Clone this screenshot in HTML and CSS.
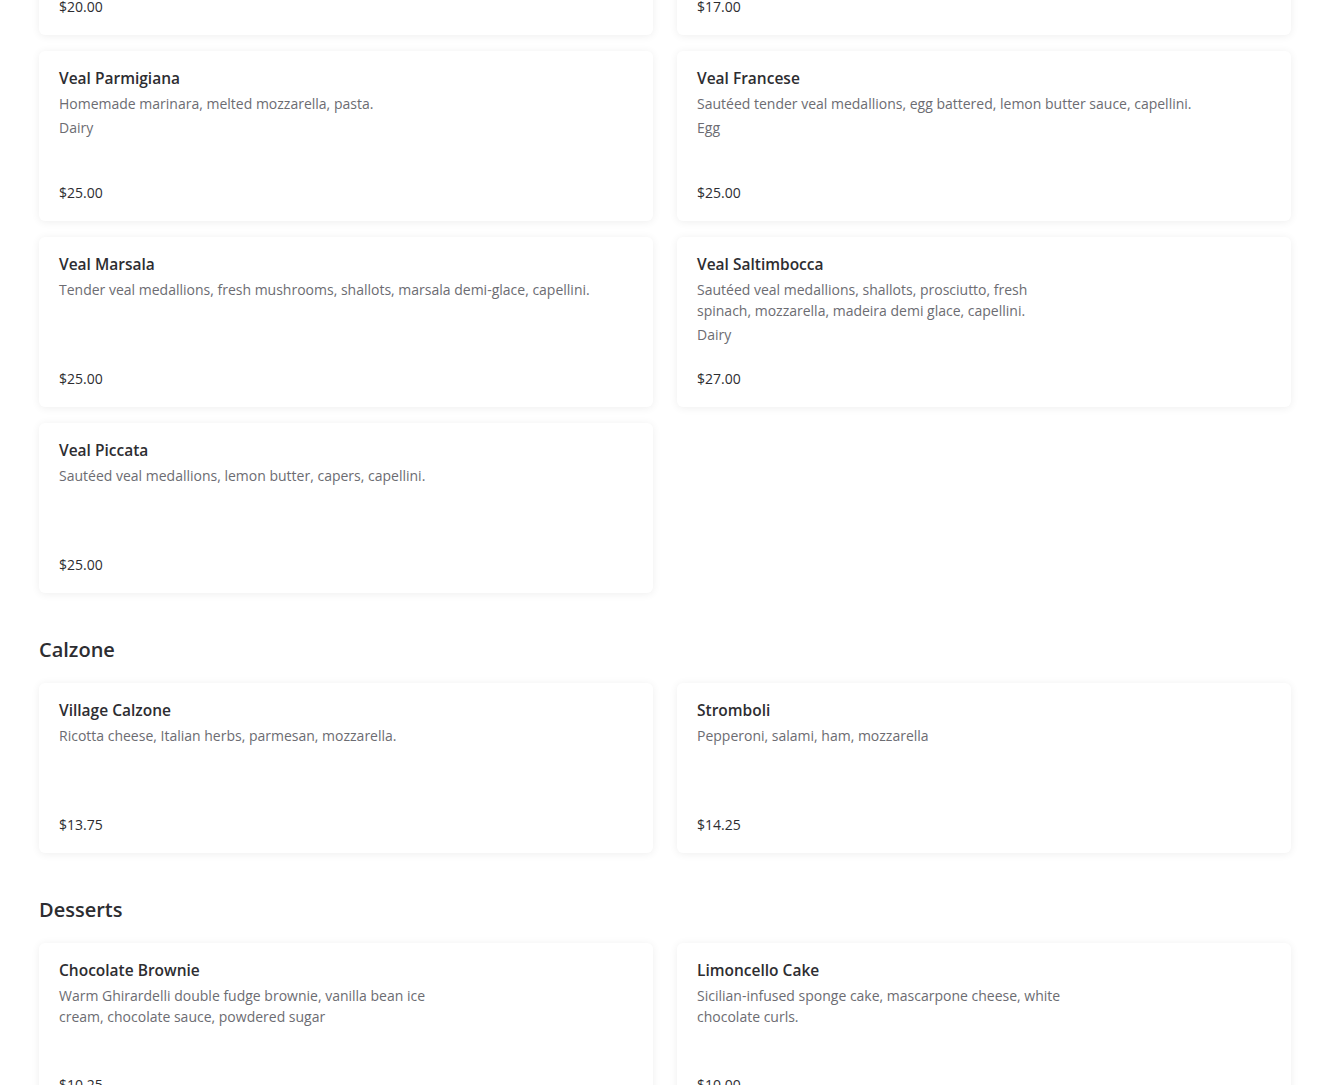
FILE: index.html
```html
<!DOCTYPE html>
<html lang="en">
<head>
    <meta charset="UTF-8">
    <meta name="viewport" content="width=device-width, initial-scale=1.0">
    <title>Menu</title>
    <link rel="stylesheet" href="styles.css">
</head>
<body>
    <div class="menu">
        <div class="items first">
            <div class="item">
                <div class="price">$20.00</div>
            </div>
            <div class="item">
                <div class="price">$17.00</div>
            </div>
            <div class="item">
                <div class="info">
                    <h3 class="name">Veal Parmigiana</h3>
                    <p class="desc">Homemade marinara, melted mozzarella, pasta.</p>
                    <p class="tags">Dairy</p>
                </div>
                <div class="price">$25.00</div>
            </div>
            <div class="item">
                <div class="info">
                    <h3 class="name">Veal Francese</h3>
                    <p class="desc">Sautéed tender veal medallions, egg battered, lemon butter sauce, capellini.</p>
                    <p class="tags">Egg</p>
                </div>
                <div class="price">$25.00</div>
            </div>
            <div class="item">
                <div class="info">
                    <h3 class="name">Veal Marsala</h3>
                    <p class="desc">Tender veal medallions, fresh mushrooms, shallots, marsala demi-glace, capellini.</p>
                </div>
                <div class="price">$25.00</div>
            </div>
            <div class="item photo">
                <div class="info">
                    <h3 class="name">Veal Saltimbocca</h3>
                    <p class="desc">Sautéed veal medallions, shallots, prosciutto, fresh spinach, mozzarella, madeira demi glace, capellini.</p>
                    <p class="tags">Dairy</p>
                </div>
                <div class="price">$27.00</div>
            </div>
            <div class="item">
                <div class="info">
                    <h3 class="name">Veal Piccata</h3>
                    <p class="desc">Sautéed veal medallions, lemon butter, capers, capellini.</p>
                </div>
                <div class="price">$25.00</div>
            </div>
        </div>

        <h2 class="section">Calzone</h2>
        <div class="items">
            <div class="item">
                <div class="info">
                    <h3 class="name">Village Calzone</h3>
                    <p class="desc">Ricotta cheese, Italian herbs, parmesan, mozzarella.</p>
                </div>
                <div class="price">$13.75</div>
            </div>
            <div class="item">
                <div class="info">
                    <h3 class="name">Stromboli</h3>
                    <p class="desc">Pepperoni, salami, ham, mozzarella</p>
                </div>
                <div class="price">$14.25</div>
            </div>
        </div>

        <h2 class="section">Desserts</h2>
        <div class="items">
            <div class="item photo">
                <div class="info">
                    <h3 class="name">Chocolate Brownie</h3>
                    <p class="desc">Warm Ghirardelli double fudge brownie, vanilla bean ice cream, chocolate sauce, powdered sugar</p>
                </div>
                <div class="price">$10.25</div>
            </div>
            <div class="item photo">
                <div class="info">
                    <h3 class="name">Limoncello Cake</h3>
                    <p class="desc">Sicilian-infused sponge cake, mascarpone cheese, white chocolate curls.</p>
                </div>
                <div class="price">$10.00</div>
            </div>
        </div>
    </div>
</body>
</html>
```

FILE: styles.css
```css
body{
    margin: 0px;
    background: #ffffff;
    font-family: "Open Sans", "Noto Sans", sans-serif;
    color: #2d2d31;
}

.menu{
    padding: 0px 39px 40px 39px;
}

.items{
    display: grid;
    grid-template-columns: 1fr 1fr;
    column-gap: 24px;
    row-gap: 16px;
}

.first{
    margin-top: -135px;
}

.item{
    height: 170px;
    box-sizing: border-box;
    padding: 16px 20px 18px 20px;
    background: #ffffff;
    border-radius: 6px;
    box-shadow: 0px 1px 8px rgba(0, 0, 0, 0.07);
    display: flex;
    flex-direction: column;
    justify-content: space-between;
}

.name{
    margin: 0px;
    font-size: 15.5px;
    line-height: 23px;
    font-weight: 600;
    color: #2d2d31;
}

.desc{
    margin: 3px 0px 0px 0px;
    font-size: 14px;
    line-height: 21px;
    color: #6c6c72;
}

.photo .desc{
    max-width: 378px;
}

.tags{
    margin: 3px 0px 0px 0px;
    font-size: 14px;
    line-height: 21px;
    color: #6c6c72;
}

.price{
    margin-top: auto;
    font-size: 14px;
    line-height: 21px;
    color: #2d2d31;
}

.section{
    margin: 43px 0px 19px 0px;
    font-size: 20px;
    line-height: 28px;
    font-weight: 600;
    color: #2d2d31;
}
```
